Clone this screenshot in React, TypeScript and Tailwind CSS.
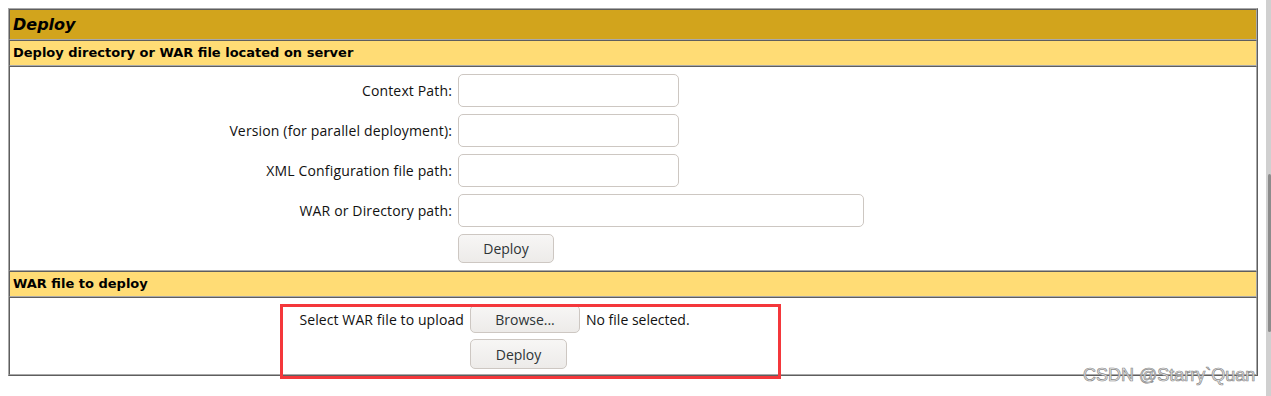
import React from "react";

const cellBorder =
  "border border-t-[#5e5e5e] border-l-[#5e5e5e] border-b-[#a9a9a9] border-r-[#a9a9a9]";

function TextInput({ wide }: { wide?: boolean }) {
  return (
    <div
      className={`h-[33px] ${wide ? "w-[406px]" : "w-[221px]"} rounded-[5px] border border-[#cdc7c2] bg-white`}
    />
  );
}

function Btn({ label, w, h }: { label: string; w: string; h: string }) {
  return (
    <div
      className={`${w} ${h} flex items-center justify-center rounded-[5px] border border-[#cdc7c2] bg-gradient-to-b from-[#f7f6f5] to-[#edebe9] text-[14px] text-[#2e3436]`}
    >
      {label}
    </div>
  );
}

function FormRow({ label, children }: { label: string; children: React.ReactNode }) {
  return (
    <div className="flex items-center gap-[6px]">
      <div className="w-[442px] text-right text-[14px] leading-none tracking-[0.15px] text-[#111]">{label}</div>
      {children}
    </div>
  );
}

export default function App() {
  return (
    <div
      className="relative flex h-[396px] w-[1271px] bg-white"
      style={{ fontFamily: '"Open Sans", "Noto Sans", sans-serif' }}
    >
      <div className="flex-1 pt-[8px] px-[8px]">
        <div className="border border-t-[#a9a9a9] border-l-[#a9a9a9] border-b-[#5e5e5e] border-r-[#5e5e5e]">
          {/* Title */}
          <div
            className={`${cellBorder} h-[31px] bg-[#d2a41c] pl-[3px] flex items-center text-[16px] font-bold italic text-black`}
            style={{ fontFamily: '"DejaVu Sans", sans-serif' }}
          >
            Deploy
          </div>
          {/* Sub header 1 */}
          <div
            className={`${cellBorder} h-[26px] bg-[#ffdc75] pl-[3px] flex items-center text-[13px] font-bold text-black`}
            style={{ fontFamily: '"DejaVu Sans", sans-serif' }}
          >
            Deploy directory or WAR file located on server
          </div>
          {/* Body 1 */}
          <div className={`${cellBorder} bg-white pt-[7px] pb-[7px]`}>
            <div className="flex flex-col gap-[7px]">
              <FormRow label="Context Path:">
                <TextInput />
              </FormRow>
              <FormRow label="Version (for parallel deployment):">
                <TextInput />
              </FormRow>
              <FormRow label="XML Configuration file path:">
                <TextInput />
              </FormRow>
              <FormRow label="WAR or Directory path:">
                <TextInput wide />
              </FormRow>
              <div className="flex gap-[6px]">
                <div className="w-[442px]" />
                <Btn label="Deploy" w="w-[96px]" h="h-[29px]" />
              </div>
            </div>
          </div>
          {/* Sub header 2 */}
          <div
            className={`${cellBorder} h-[26px] bg-[#ffdc75] pl-[3px] flex items-center text-[13px] font-bold text-black`}
            style={{ fontFamily: '"DejaVu Sans", sans-serif' }}
          >
            WAR file to deploy
          </div>
          {/* Body 2 */}
          <div className={`${cellBorder} bg-white pt-[7px] pb-[5px]`}>
            <div className="flex flex-col gap-[6px]">
              <div className="flex items-center gap-[6px]">
                <div className="w-[454px] text-right text-[14px] tracking-[0.1px] text-[#111]">Select WAR file to upload</div>
                <Btn label="Browse..." w="w-[110px]" h="h-[28px]" />
                <div className="text-[14px] text-[#111]">No file selected.</div>
              </div>
              <div className="flex gap-[6px]">
                <div className="w-[454px]" />
                <Btn label="Deploy" w="w-[97px]" h="h-[30px]" />
              </div>
            </div>
          </div>
        </div>
      </div>
      {/* scrollbar */}
      <div className="w-[5px] bg-[#d0d0d0] pt-[174px]">
        <div className="ml-[2px] h-[158px] w-[3px] rounded-full bg-[#8c8c8c]" />
      </div>

      {/* red annotation box */}
      <div className="pointer-events-none absolute left-[280px] top-[304px] h-[75px] w-[501px] border-[3px] border-[#f4373b]" />

      {/* watermark */}
      <div
        className="pointer-events-none absolute left-[1083px] top-[362px] text-[18px] text-[#ececec] [-webkit-text-stroke:0.7px_#8a8a8a]"
        style={{ fontFamily: '"Liberation Sans", Arial, sans-serif' }}
      >
        CSDN @Starry`Quan
      </div>
    </div>
  );
}
